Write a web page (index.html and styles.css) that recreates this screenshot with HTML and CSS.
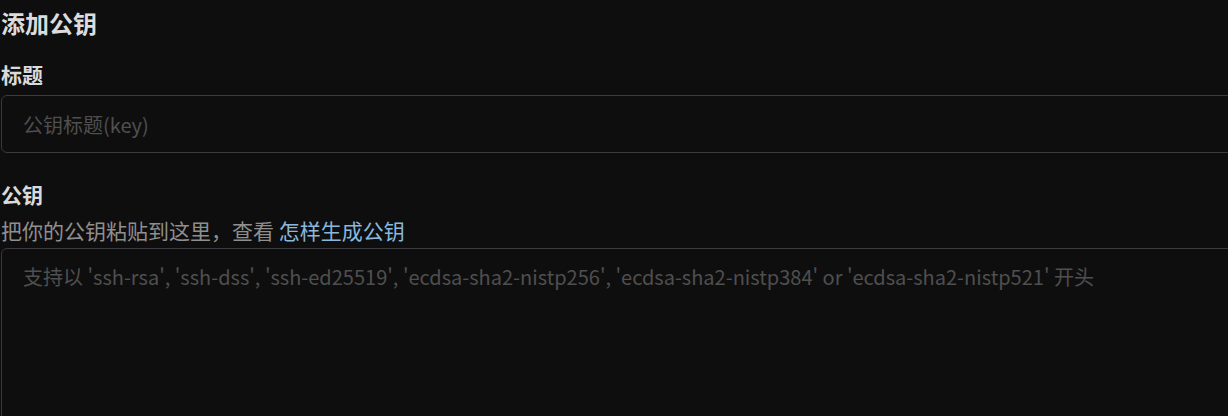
FILE: index.html
```html
<!DOCTYPE html>
<html lang="zh-CN">
<head>
<meta charset="utf-8">
<title>添加公钥</title>
<link rel="stylesheet" href="styles.css">
</head>
<body>
<div class="page">
  <h2 class="title">添加公钥</h2>
  <form class="form">
    <div class="field">
      <label class="label" for="t">标题</label>
      <input class="input" id="t" type="text" placeholder="公钥标题(key)">
    </div>
    <div class="field field-key">
      <label class="label" for="k">公钥</label>
      <div class="help">把你的公钥粘贴到这里，查看 <a class="link" href="#">怎样生成公钥</a></div>
      <textarea class="textarea" id="k" placeholder="支持以 'ssh-rsa', 'ssh-dss', 'ssh-ed25519', 'ecdsa-sha2-nistp256', 'ecdsa-sha2-nistp384' or 'ecdsa-sha2-nistp521' 开头"></textarea>
    </div>
  </form>
</div>
</body>
</html>
```
FILE: styles.css
```css
html, body {
  margin: 0;
  padding: 0;
  background: #0e0e0e;
  overflow: hidden;
}
.page {
  width: 1290px;
  padding-left: 1px;
  font-family: "Noto Sans CJK SC", "Noto Sans", sans-serif;
  color: #d9d9d9;
}
.title {
  margin: 6px 0 0;
  font-size: 24px;
  line-height: 34px;
  font-weight: 700;
  color: #dcdcdc;
}
.form {
  display: flex;
  flex-direction: column;
}
.field {
  display: flex;
  flex-direction: column;
  margin-top: 19px;
}
.field-key {
  margin-top: 26px;
}
.label {
  font-size: 21px;
  line-height: 30px;
  font-weight: 700;
  color: #dadada;
  margin-bottom: 6px;
}
.help {
  font-size: 21px;
  line-height: 30px;
  color: #8f8f8f;
  margin-top: 0;
  margin-bottom: 3px;
}
.link {
  color: #8ab7de;
  text-decoration: none;
}
.input, .textarea {
  box-sizing: border-box;
  width: 100%;
  margin: 0;
  background: #0e0e0e;
  border: 1px solid #3a3a3f;
  border-radius: 6px;
  padding: 14px 21px;
  font-family: "Noto Sans CJK SC", "Noto Sans", sans-serif;
  font-size: 20px;
  line-height: 28px;
  color: #d9d9d9;
  outline: none;
}
.input {
  height: 58px;
}
.textarea {
  display: block;
  height: 240px;
  resize: none;
}
.input::placeholder, .textarea::placeholder {
  color: #4f4f4f;
  opacity: 1;
}
```
